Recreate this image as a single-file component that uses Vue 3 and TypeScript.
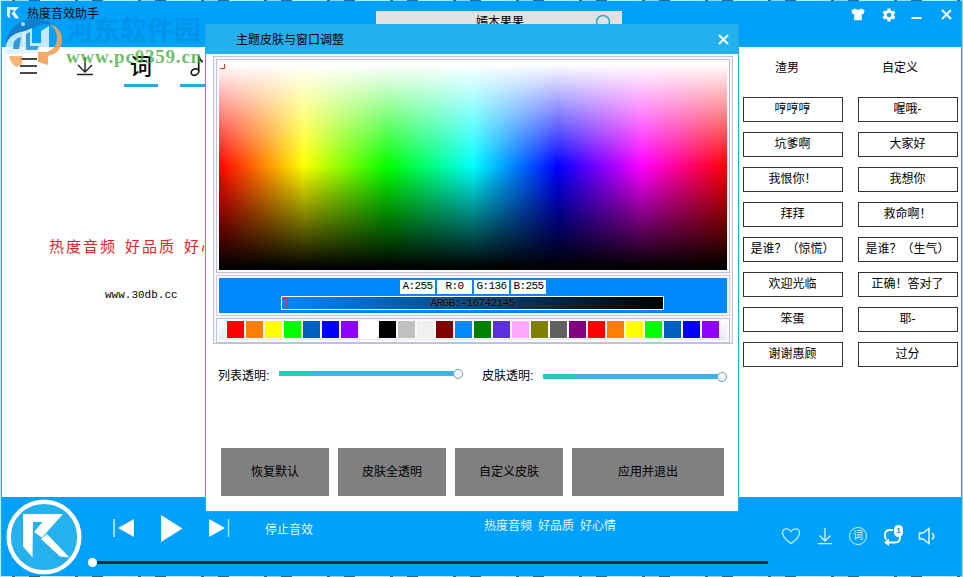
<script setup lang="ts">
import { ref } from 'vue'

interface SliderItem {
  label: string
  fill: number
  low: boolean
}

const sounds: string[][] = [
  ['哼哼哼', '喔哦-'],
  ['坑爹啊', '大家好'],
  ['我恨你！', '我想你'],
  ['拜拜', '救命啊！'],
  ['是谁？（惊慌）', '是谁？（生气）'],
  ['欢迎光临', '正确！答对了'],
  ['笨蛋', '耶-'],
  ['谢谢惠顾', '过分'],
]

const swatches: string[] = [
  '#ff0000', '#ff8000', '#ffff00', '#00ff00', '#0060c0', '#0000ff', '#9000ff',
  '#ffffff', '#000000', '#c0c0c0', '#f0f0f0', '#800000', '#0088ff', '#008000',
  '#5c30e0', '#ffa8ff', '#808000', '#606060', '#800080',
  '#ff0000', '#ff8000', '#ffff00', '#00ff00', '#0060c0', '#0000ff', '#9000ff',
]

const selected = ref('#0088ff')
const channels: string[] = ['A:255', 'R:0', 'G:136', 'B:255']
const sliders: SliderItem[] = [
  { label: '列表透明:', fill: 18.5, low: false },
  { label: '皮肤透明:', fill: 18.5, low: true },
]
const actions: string[] = ['恢复默认', '皮肤全透明', '自定义皮肤', '应用并退出']
</script>

<template>
  <div class="desktop">
    <div class="app">
      <header class="titlebar">
        <svg class="brand" viewBox="0 0 12 12"><path d="M0 0H12L7.500 4.800 12 11.500H8.500L4.500 6.500 7.500 2.800H2.800V11.500L0 9Z" fill="#fff" /></svg>
        <span class="title">热度音效助手</span>
        <div class="search">
          <span>嫣木果果</span>
          <svg width="20" height="20" viewBox="0 0 20 20" fill="none" stroke="#35abd2" stroke-width="1.600"><circle cx="7" cy="8" r="6.500" /><path d="M12 13l4 4" /></svg>
        </div>
        <div class="win-tools">
          <svg width="14" height="13" viewBox="0 0 14 13"><path d="M4 .5Q7 3 10 .5L13.700 2.500 12.500 6H10.800V12.300H3.200V6H1.500L.3 2.500Z" fill="#fff" /></svg>
          <svg width="14" height="14" viewBox="0 0 24 24"><path fill="#fff" fill-rule="evenodd" d="M9.500 1h5l.7 3.300 2 1.100 3.200-1 2.500 4.300-2.500 2.200v2.200l2.500 2.200-2.500 4.300-3.200-1-2 1.100-.7 3.300h-5l-.7-3.300-2-1.100-3.200 1-2.500-4.300 2.500-2.200v-2.200L1.100 8.700l2.500-4.300 3.200 1 2-1.100zM12 8a4 4 0 1 0 0 8 4 4 0 0 0 0-8z" /></svg>
          <svg width="11" height="12" viewBox="0 0 11 12"><path d="M.5 8h10" stroke="#fff" stroke-width="2" /></svg>
          <svg width="11" height="12" viewBox="0 0 11 12"><path d="M1 1l9 9M10 1l-9 9" stroke="#fff" stroke-width="2" /></svg>
        </div>
      </header>

      <main class="body">
        <section class="left">
          <nav class="tabs">
            <span class="tab"><svg width="18" height="18" viewBox="0 0 18 18" stroke="#111" stroke-width="1.600"><path d="M0 2h17M0 9h17M0 16h17" /></svg></span>
            <span class="tab"><svg width="18" height="20" viewBox="0 0 18 20" fill="none" stroke="#222" stroke-width="1.400"><path d="M9 1v15M2 9l7 7 7-7M1 18.500h16" /></svg></span>
            <span class="tab on word">词</span>
            <span class="tab on"><svg width="20" height="22" viewBox="0 0 20 22" fill="none" stroke="#111" stroke-width="1.600"><ellipse cx="8" cy="17" rx="4" ry="3" transform="rotate(-25 8 17)" /><path d="M11.700 16V1q1 4 4 6" /></svg></span>
          </nav>
          <p class="slogan">热度音频<i></i>好品质<i></i>好心情</p>
          <p class="site">www.30db.cc</p>
        </section>
        <section class="right">
          <div class="cats"><span>渣男</span><span>自定义</span></div>
          <div class="sounds">
            <template v-for="(row, r) in sounds" :key="r">
              <button v-for="s in row" :key="s" class="sound">{{ s }}</button>
            </template>
          </div>
        </section>
      </main>

      <footer class="player">
        <svg class="disc" width="76" height="76" viewBox="0 0 76 76">
          <circle cx="38" cy="38" r="35.300" fill="#24b1ee" stroke="#fff" stroke-width="4.400" />
          <path fill="#fff" d="M17 15H57L36 38.500 28 33 36.500 23H27L26.500 58.500 17 47.500Z" />
          <path fill="#fff" d="M35 40L41 35 63.500 58.500 54 57.500Z" />
        </svg>
        <div class="deck">
          <div class="controls">
            <svg class="prev" width="22" height="18" viewBox="0 0 22 18"><path d="M1 0v18" stroke="#cdf3ff" stroke-width="1.500" /><path d="M21 0v18L5 9z" fill="#fff" /></svg>
            <svg class="play" width="23" height="27" viewBox="0 0 23 27"><path d="M1 0l21.500 13.500L1 27z" fill="#fff" /></svg>
            <svg class="next" width="22" height="18" viewBox="0 0 22 18"><path d="M20.500 0v18" stroke="#9ce5ff" stroke-width="1.500" /><path d="M1 0v18L17 9z" fill="#fff" /></svg>
            <span class="stop">停止音效</span>
            <span class="now">热度音频<i></i>好品质<i></i>好心情</span>
            <div class="opts">
              <svg width="20" height="18" viewBox="0 0 20 18" fill="none" stroke="#b9f1ff" stroke-width="1.300"><path d="M10 16.500C6 13.500 1.500 10.500 1.500 6 1.500 1 7.500 .5 10 4.500c2.500-4 8.500-3.500 8.500 1.500C18.500 10.500 14 13.500 10 16.500z" /></svg>
              <svg width="16" height="18" viewBox="0 0 16 18" fill="none" stroke="#d4f8ff" stroke-width="1.300"><path d="M8 1v13M2.500 8.500L8 14l5.500-5.500M1 16.700h14" /></svg>
              <span class="lyric">词</span>
              <span class="loop">
                <svg width="20" height="20" viewBox="0 0 20 20" fill="none" stroke="#fff" stroke-width="1.900"><path d="M10 4H7Q2 4 2 9v1.500Q2 12 3.500 13.500M5 16.500h7q5 0 5-5V10" /><path d="M6 12.500L1 16.500 6 20z" fill="#fff" stroke="none" /></svg>
                <b>1</b>
              </span>
              <svg width="18" height="18" viewBox="0 0 18 18" fill="none" stroke="#dffaff" stroke-width="1.500"><path d="M1.500 6H5l6-4.500v15L5 12H1.500z" /><path d="M14 6q3.500 3 0 6.500" /></svg>
            </div>
          </div>
          <div class="progress"><span class="knob"></span><span class="rail"></span></div>
        </div>
      </footer>
    </div>

    <div class="dialog">
      <div class="dlg-head">
        <span>主题皮肤与窗口调整</span>
        <svg width="11" height="11" viewBox="0 0 11 11"><path d="M1 1l9 9M10 1l-9 9" stroke="#eefcff" stroke-width="2" /></svg>
      </div>
      <div class="picker">
        <div class="frame"><div class="spectrum"><span class="mark"></span></div></div>
        <div class="frame warm">
          <div class="current">
            <div class="channels"><span v-for="c in channels" :key="c">{{ c }}</span></div>
            <div class="argb"><span class="cursor"></span><span class="value">ARGB:-16742145</span></div>
          </div>
        </div>
        <div class="frame">
          <div class="palette">
            <span v-for="(c, i) in swatches" :key="i" class="swatch" :style="{ background: c }" @click="selected = c"></span>
          </div>
        </div>
      </div>
      <div class="sliders">
        <div v-for="s in sliders" :key="s.label" class="slider" :class="{ low: s.low }">
          <label>{{ s.label }}</label>
          <div class="track"><span class="fill" :style="{ width: s.fill + '%' }"></span><span class="thumb"></span></div>
        </div>
      </div>
      <div class="actions"><button v-for="a in actions" :key="a">{{ a }}</button></div>
    </div>

    <div class="watermark">
      <svg width="60" height="52" viewBox="0 0 60 52">
        <path d="M2 26Q5 8 22 3Q38 -1 50 8L38 7 26 13Q8 18 2 26Z" fill="#1479c4" opacity=".85" />
        <path d="M1 34Q2 16 22 14L19 37H5Q2 37 1 34Z" fill="#d9f3ff" opacity=".85" />
        <path d="M9 32Q9 21 17 20L15 32Z" fill="#1789d2" opacity=".85" />
        <path d="M19 15L28 11V26H37V14L45 9V30H36L33 36H19Z" fill="#e4f5ff" opacity=".85" />
        <path d="M22 17L26 15V29H35L33 33H22Z" fill="#1789d2" opacity=".8" />
        <path d="M46 7Q58 11 58 24Q57 36 44 39V48L34 45V35H43Q53 31 53 21Q53 13 46 7Z" fill="#f5a254" opacity=".9" />
        <path d="M5 39H18V47L12 50Q6 46 5 39Z" fill="#f5a254" opacity=".8" />
        <circle cx="19" cy="7" r="2" fill="#a5ddff" />
      </svg>
      <div class="wm-text"><strong>河东软件园</strong><em>www.pc0359.cn</em></div>
    </div>
  </div>
</template>

<style>
body { margin: 0; overflow: hidden; }
</style>

<style scoped>
* { box-sizing: border-box; }
.desktop {
  position: relative; width: 963px; height: 577px; padding: 1px; overflow: hidden;
  background: repeating-linear-gradient(90deg, #a9edf8 0 12px, #31658e 12px 15px, #8ad9ee 15px 29px, #1d6ca3 29px 40px, #b3f2f8 40px 63px);
  font-family: "Liberation Sans", "Noto Sans CJK SC", sans-serif; font-size: 12px; line-height: 16px; color: #000;
}
button { font: inherit; color: inherit; padding: 0; border-radius: 0; }
svg { display: block; flex: none; }
p { margin: 0; }
.app { width: 961px; height: 575px; display: flex; flex-direction: column; background: #fff; border: solid #1fb0d2; border-width: 0 1px; }
.titlebar { height: 46px; flex: none; display: flex; background: #00a1fa; padding: 4px 9px 0 5px; }
.brand { width: 12px; height: 12px; margin: 2px 8px 0 0; }
.title { width: 349px; flex: none; padding-top: 1px; }
.search { width: 246px; height: 22px; margin-top: 6px; flex: none; background: #e1e1e1; display: flex; justify-content: space-between; padding: 3px 6px 0 100px; }
.win-tools { margin-left: auto; display: flex; gap: 17px; padding-top: 3px; }
.win-tools svg:nth-child(3) { margin: 2px 2px 0 -4px; }
.win-tools svg:nth-child(2) { margin-right: 2px; }
.win-tools svg:nth-child(4) { margin-top: 1px; }

.body { height: 450px; display: flex; justify-content: space-between; }
.left { width: 204px; overflow: hidden; }
.tabs { display: flex; gap: 22px; padding-left: 10px; height: 40px; width: 260px; }
.tab { width: 34px; height: 40px; flex: none; display: flex; justify-content: center; align-items: center; border-bottom: 3px solid transparent; }
.tab.on { border-bottom-color: #25a9e5; }
.word { font-size: 22px; line-height: 24px; font-weight: 500; padding-top: 3px; }
.slogan { display: flex; margin: 150px 0 0 47px; font-size: 15px; line-height: 20px; letter-spacing: 2px; color: #df2525; white-space: nowrap; }
.slogan i { width: 8px; flex: none; }
.site { margin: 30px 0 0 103px; font: 11px/16px "Liberation Mono", monospace; }

.right { width: 223px; border-left: 1px solid #1fb0d2; padding-left: 4px; }
.cats { display: flex; height: 50px; padding: 13px 0 0 32px; gap: 83px; }
.sounds { display: grid; grid-template-columns: 100px 100px; gap: 10px 15px; }
.sound { height: 25px; border: 1px solid #333; background: #fff; line-height: 20px; padding: 0 1px 2px 0; white-space: nowrap; }

.player { height: 79px; flex: none; background: #00a1fa; display: flex; padding: 2px 0 0 4px; color: #e1faff; }
.deck { flex: 1; display: flex; flex-direction: column; padding-left: 5px; }
.controls { height: 59px; display: flex; align-items: flex-start; }
.prev { margin: 20px 0 0 26px; }
.play { margin: 16px 0 0 25px; }
.next { margin: 20px 0 0 25px; }
.stop { width: 48px; margin: 23px 0 0 35px; }
.now { display: flex; margin: 19px 0 0 171px; white-space: nowrap; }
.now i { width: 6px; }
.opts { display: flex; align-items: center; margin-left: auto; padding: 27px 25px 0 0; gap: 16px; }
.lyric { width: 18px; height: 18px; border: 1px solid #c9f5ff; border-radius: 50%; font-size: 10px; line-height: 15px; text-align: center; }
.loop { position: relative; margin-right: -1px; }
.loop b { position: absolute; right: 0; top: -1px; width: 9px; height: 12px; border-radius: 5px; background: #fff; color: #2488ba; font-size: 8px; line-height: 12px; text-align: center; }
.progress { display: flex; align-items: center; height: 9px; }
.knob { width: 9px; height: 9px; border-radius: 50%; background: #fff; margin-left: 1px; }
.rail { width: 671px; height: 3px; background: #102b3b; }

.dialog { position: absolute; left: 205px; top: 24px; width: 534px; height: 488px; background: #fff; border: solid #28a9dc; border-width: 0 1px 1px; }
.dlg-head { height: 30px; display: flex; justify-content: space-between; align-items: center; padding: 1px 9px 0 30px; background: #22b1ed; }
.dlg-head svg { margin-bottom: 1px; }
.picker { margin: 2px 5px 0 7px; height: 288px; width: 520px; border: 1px solid #c2c2d1; padding: 2px; display: flex; flex-direction: column; gap: 2px; background: #f6f6fa; }
.frame { border: 1px solid #bfc3d7; padding: 2px 2px 2px; background: #f7f9fc; }
.frame.warm { border-color: #decbd1; }
.spectrum {
  height: 208px; padding: 2px 0 0 1px;
  background:
    linear-gradient(#fff 1%, rgba(255,255,255,0) 50%, rgba(0,0,0,0) 50%, #000 99%),
    linear-gradient(90deg, #f00, #ff0, #0f0, #0ff, #00f, #f0f, #f00);
}
.mark { display: block; width: 5px; height: 5px; border-right: 1px solid #dd3333; border-bottom: 1px solid #dd3333; }
.current { height: 35px; background: #0088ff; padding-top: 2px; }
.channels { display: flex; gap: 2px; padding-left: 181px; height: 14px; font: 11px/13px "Liberation Mono", monospace; letter-spacing: -.6px; }
.channels span { width: 35px; background: #f8ffff; text-align: center; }
.argb { width: 383px; height: 14px; margin: 2px 0 0 62px; border: 1px solid #fff; background: linear-gradient(90deg, #0088ff, #000); display: flex; align-items: center; }
.cursor { width: 5px; height: 10px; border: 1px solid #cb3060; border-left: 0; border-radius: 0 2px 2px 0; }
.value { width: 371px; text-align: center; font: 11px/12px "Liberation Mono", monospace; letter-spacing: -.6px; text-shadow: 0 0 3px #6a7f93; }
.palette { height: 19px; display: flex; gap: 2px; padding: 0 0 2px 8px; background: linear-gradient(#fafbfc, #e8ebef); }
.swatch { width: 17px; height: 17px; box-shadow: 0 0 0 1px rgba(255,255,255,.65); }
.sliders { display: flex; gap: 24px; padding: 23px 0 0 12px; }
.slider { display: flex; align-items: flex-start; }
.slider label { width: 61px; padding-top: 1px; white-space: nowrap; }
.track { width: 179px; height: 5px; margin-top: 4px; background: #39b5ec; display: flex; align-items: center; }
.low .track { margin-top: 7px; }
.fill { height: 5px; background: #25cbb7; }
.thumb { width: 10px; height: 10px; margin: 0 -5px 0 auto; border: 1px solid #6799c7; border-radius: 50%; background: linear-gradient(#fff, #edf2f7); }
.actions { display: grid; grid-template-columns: 108px 108px 108px 152px; gap: 9px; padding: 64px 0 0 15px; }
.actions button { height: 48px; border: 0; background: #808080; }

.watermark { position: absolute; left: 4px; top: 17px; display: flex; pointer-events: none; }
.wm-text { display: flex; flex-direction: column; padding-left: 2px; white-space: nowrap; }
.wm-text strong { font-size: 27px; line-height: 28px; font-weight: 700; color: rgba(0, 133, 219, .5); }
.wm-text em { font: 700 19px/24px "Liberation Serif", serif; letter-spacing: .8px; color: rgba(72, 171, 65, .8); }
</style>
